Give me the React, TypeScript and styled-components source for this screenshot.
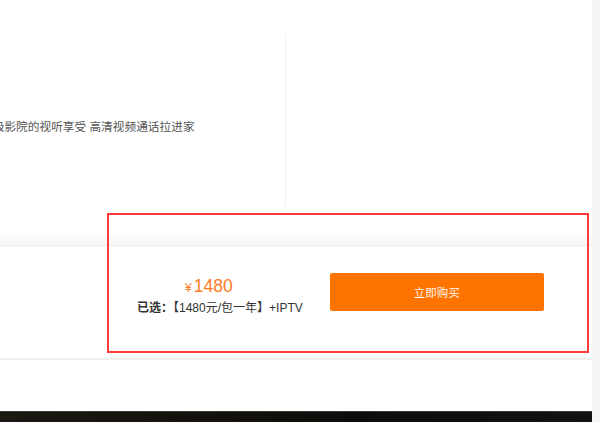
import React from 'react';
import styled, {createGlobalStyle} from 'styled-components';

const GlobalStyle = createGlobalStyle`
  *, *::before, *::after {
    box-sizing: border-box;
  }
  html, body {
    margin: 0;
    padding: 0;
    background: #fff;
    overflow: hidden;
  }
  body {
    font-family: "Liberation Sans", "Noto Sans CJK SC", sans-serif;
  }
`

const Page = styled.div`
  display: flex;
  width: 600px;
  height: 422px;
  overflow: hidden;
`

const Main = styled.div`
  flex: 1;
  position: relative;
  display: flex;
  flex-direction: column;
  overflow: hidden;
`

const ScrollTrack = styled.div`
  width: 8px;
  background: #f4f4f4;
`

const Intro = styled.div`
  flex-shrink: 0;
  height: 232px;
  display: grid;
  grid-template-columns: 286px 1fr;
`

const IntroCol = styled.div`
  margin-top: 35px;
  height: 172px;
  border-right: 1px solid #f0f0f0;
  padding-top: 84px;
`

const IntroText = styled.p`
  margin: 0 0 0 -19px;
  white-space: nowrap;
  font-size: 11.7px;
  line-height: 16px;
  color: #555;
`

const Shade = styled.div`
  flex-shrink: 0;
  height: 15px;
  background: linear-gradient(#fff, #f3f3f3);
`

const BuyBar = styled.div`
  flex-shrink: 0;
  height: 113px;
  border-bottom: 2px solid #f1f1f1;
  background: #fff;
  display: flex;
  align-items: flex-start;
  padding: 26px 0 0 137px;
  gap: 27px;
`

const PriceBlock = styled.div`
  display: flex;
  flex-direction: column;
  padding-top: 3px;
`

const Price = styled.div`
  padding-left: 48px;
  color: #ff7a26;
  font-size: 17.5px;
  line-height: 20px;
`

const Yen = styled.span`
  font-size: 12px;
  margin-right: 2px;
`

const Summary = styled.div`
  margin-top: 2px;
  font-size: 12px;
  line-height: 16px;
  color: #333;
  white-space: nowrap;
`

const SummaryLabel = styled.b`
  font-weight: bold;
`

const BuyButton = styled.button`
  width: 214px;
  height: 38px;
  border: none;
  border-radius: 2px;
  background: #ff7400;
  color: #fff7ee;
  font-family: inherit;
  font-size: 11.5px;
  cursor: pointer;
`

const Gap = styled.div`
  flex-shrink: 0;
  height: 51px;
`

const Footer = styled.div`
  flex: 1;
  border-top: 1px solid #3a3835;
  background: linear-gradient(90deg, #1c1812, #0e0c0a 60%, #141210);
`

const Highlight = styled.div`
  position: absolute;
  left: 107px;
  top: 213px;
  width: 482px;
  height: 140px;
  border: 2.5px solid #ff3c3c;
  pointer-events: none;
`

const App = () => {
    return (<>
            <GlobalStyle/>
            <Page>
                <Main>
                    <Intro>
                        <IntroCol>
                            <IntroText>超级影院的视听享受 高清视频通话拉进家</IntroText>
                        </IntroCol>
                        <div/>
                    </Intro>
                    <Shade/>
                    <BuyBar>
                        <PriceBlock>
                            <Price><Yen>¥</Yen>1480</Price>
                            <Summary><SummaryLabel>已选：</SummaryLabel>【1480元/包一年】+IPTV</Summary>
                        </PriceBlock>
                        <BuyButton>立即购买</BuyButton>
                    </BuyBar>
                    <Gap/>
                    <Footer/>
                    <Highlight/>
                </Main>
                <ScrollTrack/>
            </Page>
        </>
    );
};

export default App;
